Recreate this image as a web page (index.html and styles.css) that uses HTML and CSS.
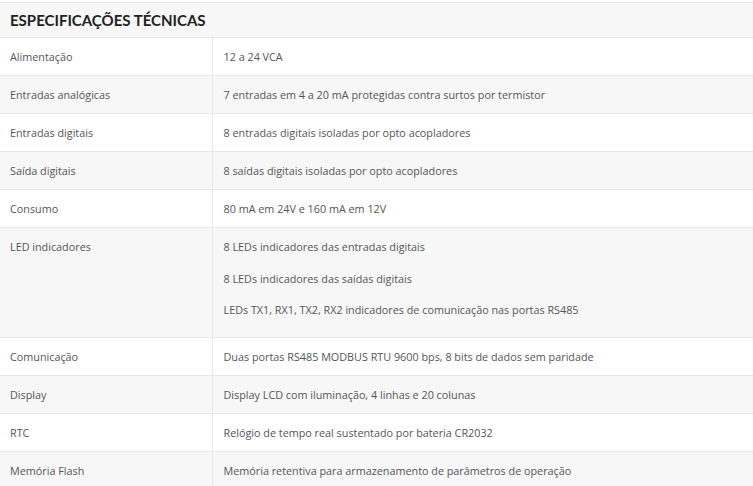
FILE: index.html
```html
<!DOCTYPE html>
<html lang="pt">
<head>
<meta charset="utf-8">
<link rel="stylesheet" href="styles.css">
</head>
<body>
<table class="specs">
  <colgroup>
    <col class="col-label">
    <col class="col-value">
  </colgroup>
  <thead>
    <tr><th colspan="2">ESPECIFICAÇÕES TÉCNICAS</th></tr>
  </thead>
  <tbody>
    <tr><td class="label">Alimentação</td><td>12 a 24 VCA</td></tr>
    <tr class="alt"><td class="label">Entradas analógicas</td><td>7 entradas em 4 a 20 mA protegidas contra surtos por termistor</td></tr>
    <tr><td class="label">Entradas digitais</td><td>8 entradas digitais isoladas por opto acopladores</td></tr>
    <tr class="alt"><td class="label">Saída digitais</td><td>8 saídas digitais isoladas por opto acopladores</td></tr>
    <tr><td class="label">Consumo</td><td>80 mA em 24V e 160 mA em 12V</td></tr>
    <tr class="alt multi"><td class="label">LED indicadores</td><td>
      <p class="first">8 LEDs indicadores das entradas digitais</p>
      <p>8 LEDs indicadores das saídas digitais</p>
      <p class="last">LEDs TX1, RX1, TX2, RX2 indicadores de comunicação nas portas RS485</p>
    </td></tr>
    <tr><td class="label">Comunicação</td><td>Duas portas RS485 MODBUS RTU 9600 bps, 8 bits de dados sem paridade</td></tr>
    <tr class="alt"><td class="label">Display</td><td>Display LCD com iluminação, 4 linhas e 20 colunas</td></tr>
    <tr><td class="label">RTC</td><td>Relógio de tempo real sustentado por bateria CR2032</td></tr>
    <tr class="alt"><td class="label">Memória Flash</td><td>Memória retentiva para armazenamento de parâmetros de operação</td></tr>
  </tbody>
</table>
</body>
</html>
```
FILE: styles.css
```css
html, body {
  margin: 0;
  padding: 0;
  background: #ffffff;
}
body {
  padding-top: 2px;
  font-family: "Open Sans", "DejaVu Sans", sans-serif;
  font-size: 10.8px;
  color: #555555;
}
.specs {
  width: 753px;
  border-collapse: collapse;
  table-layout: fixed;
}
.col-label {
  width: 212px;
}
.specs th {
  background: #f7f7f7;
  border-top: 1px solid #e8e8e8;
  border-bottom: 1px solid #e8e8e8;
  text-align: left;
  font-family: Lato, "Liberation Sans", sans-serif;
  font-weight: 700;
  font-size: 15px;
  color: #222222;
  height: 35px;
  padding: 0 10px;
  box-sizing: border-box;
  line-height: 18px;
}
.specs td {
  border-bottom: 1px solid #e8e8e8;
  padding: 11px 10px 11px 11px;
  line-height: 15px;
  vertical-align: top;
  white-space: nowrap;
}
.specs td.label {
  padding-left: 10px;
  border-right: 1px solid #e8e8e8;
}
.specs tr.alt td {
  background: #f7f7f7;
}
.specs p {
  margin: 0 0 16px;
}
.specs p.first {
  margin-bottom: 17px;
}
.specs p.last {
  margin-bottom: 9px;
}
```
